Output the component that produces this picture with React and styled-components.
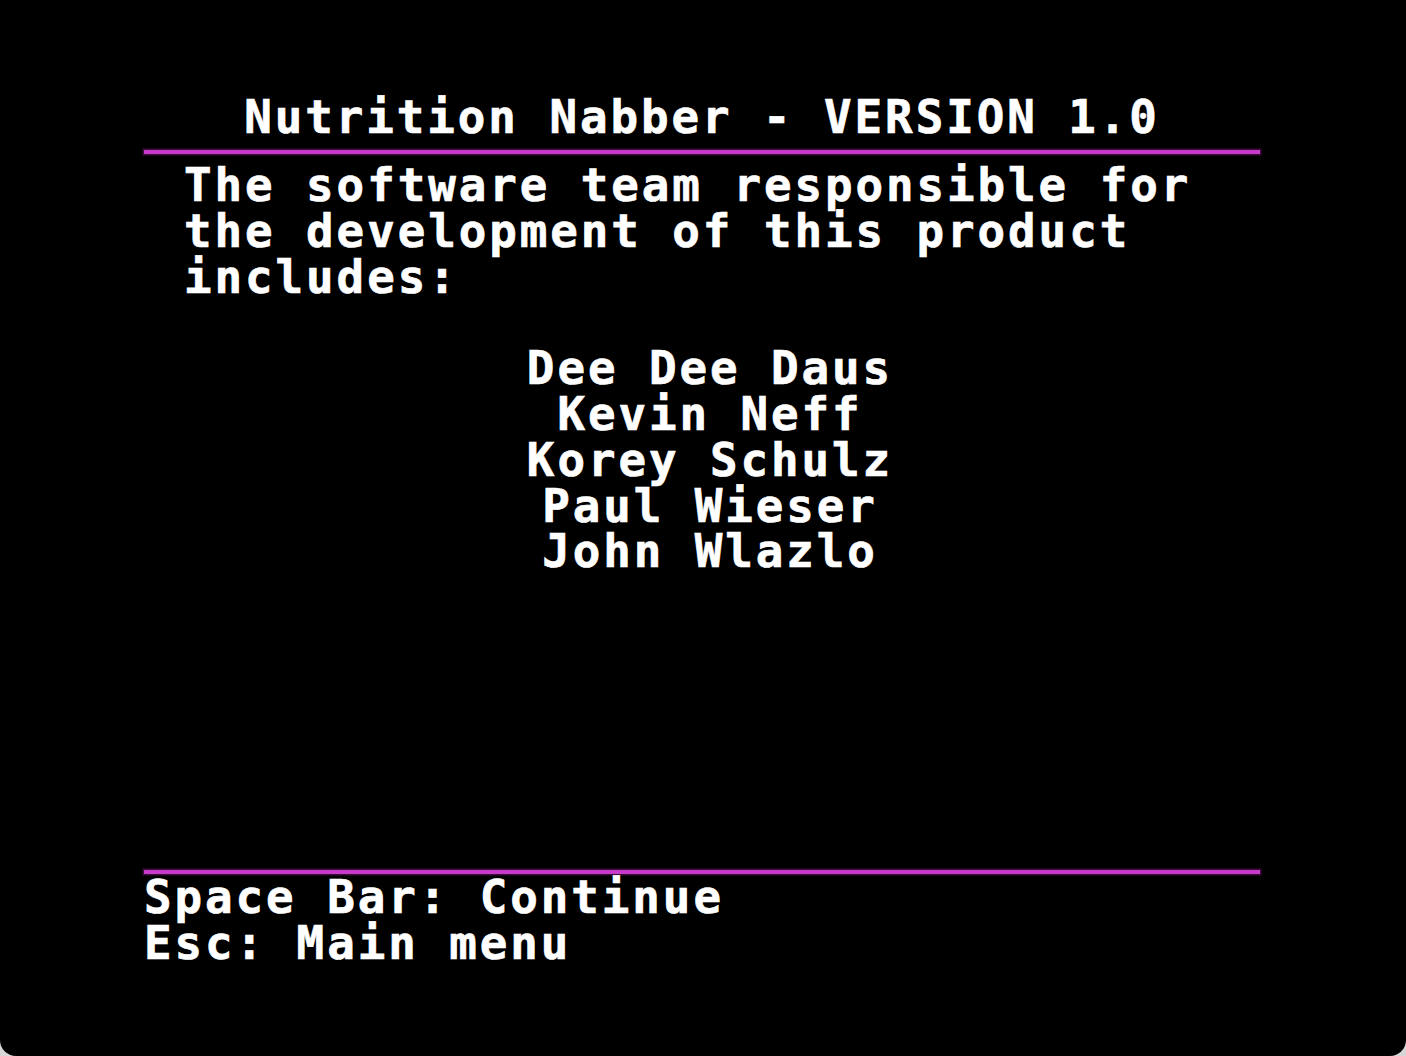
import React from "react";
import styled, { createGlobalStyle } from "styled-components";

const GlobalStyle = createGlobalStyle`
  html, body {
    margin: 0;
    padding: 0;
    background: #d6d6d6;
  }
  * { box-sizing: border-box; }
`;

const PITCH_Y = 45.8;

const Screen = styled.div`
  width: 1406px;
  height: 1056px;
  background: #000;
  border-radius: 0 0 16px 16px;
  overflow: hidden;
  display: flex;
  flex-direction: column;
  padding: 94.5px 146px 89.2px 144px;
  color: #fff;
  font-family: "DejaVu Sans Mono", "Liberation Mono", monospace;
  font-weight: 700;
  font-size: 45.8px;
  line-height: ${PITCH_Y}px;
  letter-spacing: 2.95px;
  -webkit-text-stroke: 0.7px #fff;
  white-space: pre;
`;

const Title = styled.div`
  text-align: center;
`;

const Rule = styled.div`
  height: 4px;
  background: #c63cc8;
  box-shadow: 0 0 0 1.5px rgba(110, 20, 110, 0.55);
  margin-top: ${(p) => p.$top}px;
  ${(p) => p.$auto && "margin-top: auto;"}
`;

const Lines = styled.div`
  display: flex;
  flex-direction: column;
  margin-top: ${(p) => p.$top || 0}px;
  padding-left: ${(p) => p.$indent || 0}px;
  align-items: ${(p) => (p.$center ? "center" : "flex-start")};
`;

const Line = styled.div``;

const credits = ["Dee Dee Daus", "Kevin Neff", "Korey Schulz", "Paul Wieser", "John Wlazlo"];

export default function App() {
  return (
    <>
      <GlobalStyle />
      <Screen>
        <Title>Nutrition Nabber - VERSION 1.0</Title>
        <Rule $top={10.2} />
        <Lines $top={8.5} $indent={40}>
          <Line>The software team responsible for</Line>
          <Line>the development of this product</Line>
          <Line>includes:</Line>
        </Lines>
        <Lines $top={PITCH_Y} $center $indent={16}>
          {credits.map((name) => (
            <Line key={name}>{name}</Line>
          ))}
        </Lines>
        <Rule $auto />
        <Lines $top={1.2} $indent={-3}>
          <Line>Space Bar: Continue</Line>
          <Line>Esc: Main menu</Line>
        </Lines>
      </Screen>
    </>
  );
}
